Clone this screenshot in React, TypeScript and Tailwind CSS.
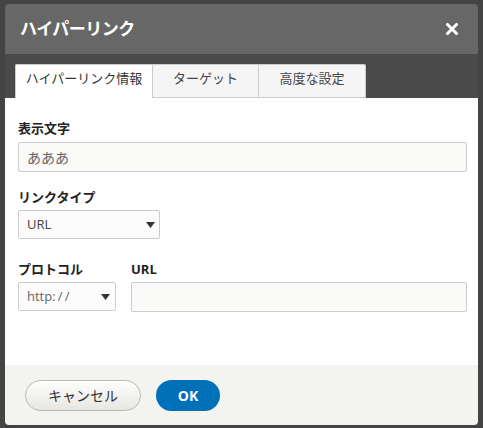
import React from "react";

const font = { fontFamily: '"Open Sans", "Noto Sans CJK JP", sans-serif' };

function Arrow() {
  return (
    <svg width="9" height="6" viewBox="0 0 9 6" className="shrink-0">
      <path d="M0 0 L9 0 L4.5 6 Z" fill="#333" />
    </svg>
  );
}

export default function App() {
  return (
    <div className="w-[483px] h-[428px] bg-[#444444] pt-[4px] pl-[5px] overflow-hidden" style={font}>
      <div className="w-[473px] h-[421px] rounded-[4px] overflow-hidden flex flex-col">
        <div className="h-[50px] bg-[#676767] flex items-center justify-between pl-[15px] pr-[20px]">
          <span className="text-white font-bold text-[17px] tracking-[-0.5px]">ハイパーリンク</span>
          <svg width="12" height="12" viewBox="0 0 12 12">
            <path d="M1.5 1.5 L10.5 10.5 M10.5 1.5 L1.5 10.5" stroke="#fff" strokeWidth="3" strokeLinecap="square" />
          </svg>
        </div>
        <div className="h-[44px] bg-[#4a4a4a] flex items-end pl-[10px]">
          <div className="w-[137px] h-[34px] bg-white border-l border-t border-[#cccccc] rounded-tl-[2px] flex justify-center pt-[4px] text-[13px] text-[#333]">
            ハイパーリンク情報
          </div>
          <div className="w-[107px] h-[34px] bg-[#f5f5f5] border border-[#cccccc] flex justify-center pt-[4px] text-[13px] text-[#444]">
            ターゲット
          </div>
          <div className="w-[107px] h-[34px] bg-[#f5f5f5] border border-l-0 border-[#cccccc] rounded-tr-[2px] flex justify-center pt-[4px] text-[13px] text-[#444]">
            高度な設定
          </div>
        </div>
        <div className="flex-1 bg-white pl-[13px] pr-[11px] pt-[21px]">
          <div className="text-[13px] font-bold text-[#222] leading-[19px]">表示文字</div>
          <div className="mt-[4px] h-[30px] border border-[#cccccc] rounded-[2px] bg-[#fafaf8] flex items-center px-[8px] text-[14px] text-[#666]">
            あああ
          </div>
          <div className="mt-[16px] text-[13px] font-bold text-[#222] leading-[19px]">リンクタイプ</div>
          <div className="mt-[3px] w-[142px] h-[29px] border border-[#cccccc] rounded-[2px] bg-[#fcfcfc] flex items-center justify-between pl-[8px] pr-[4px] text-[13px] text-[#444]">
            <span>URL</span>
            <Arrow />
          </div>
          <div className="mt-[21px] flex gap-[15px]">
            <div className="flex flex-col">
              <div className="text-[13px] font-bold text-[#222] leading-[19px]">プロトコル</div>
              <div className="mt-[3px] w-[98px] h-[29px] border border-[#cccccc] rounded-[2px] bg-[#fcfcfc] flex items-center justify-between pl-[8px] pr-[5px] text-[13px] text-[#666]">
                <span>http:&thinsp;/&thinsp;/</span>
                <Arrow />
              </div>
            </div>
            <div className="flex flex-col flex-1">
              <div className="text-[13px] font-bold text-[#222] leading-[19px]">URL</div>
              <div className="mt-[3px] h-[30px] border border-[#cccccc] rounded-[2px] bg-[#fafaf8]" />
            </div>
          </div>
        </div>
        <div className="h-[60px] bg-[#f3f3ef] flex items-start pt-[15px] pl-[20px] gap-[15px]">
          <div className="w-[116px] h-[31px] rounded-full border border-[#b8b8b8] bg-gradient-to-b from-[#fefefe] to-[#e6e6e2] flex items-center justify-center text-[14px] text-[#333]">
            キャンセル
          </div>
          <div className="w-[64px] h-[31px] rounded-full bg-[#0071b8] flex items-center justify-center text-[14px] font-bold text-white">
            OK
          </div>
        </div>
      </div>
    </div>
  );
}
